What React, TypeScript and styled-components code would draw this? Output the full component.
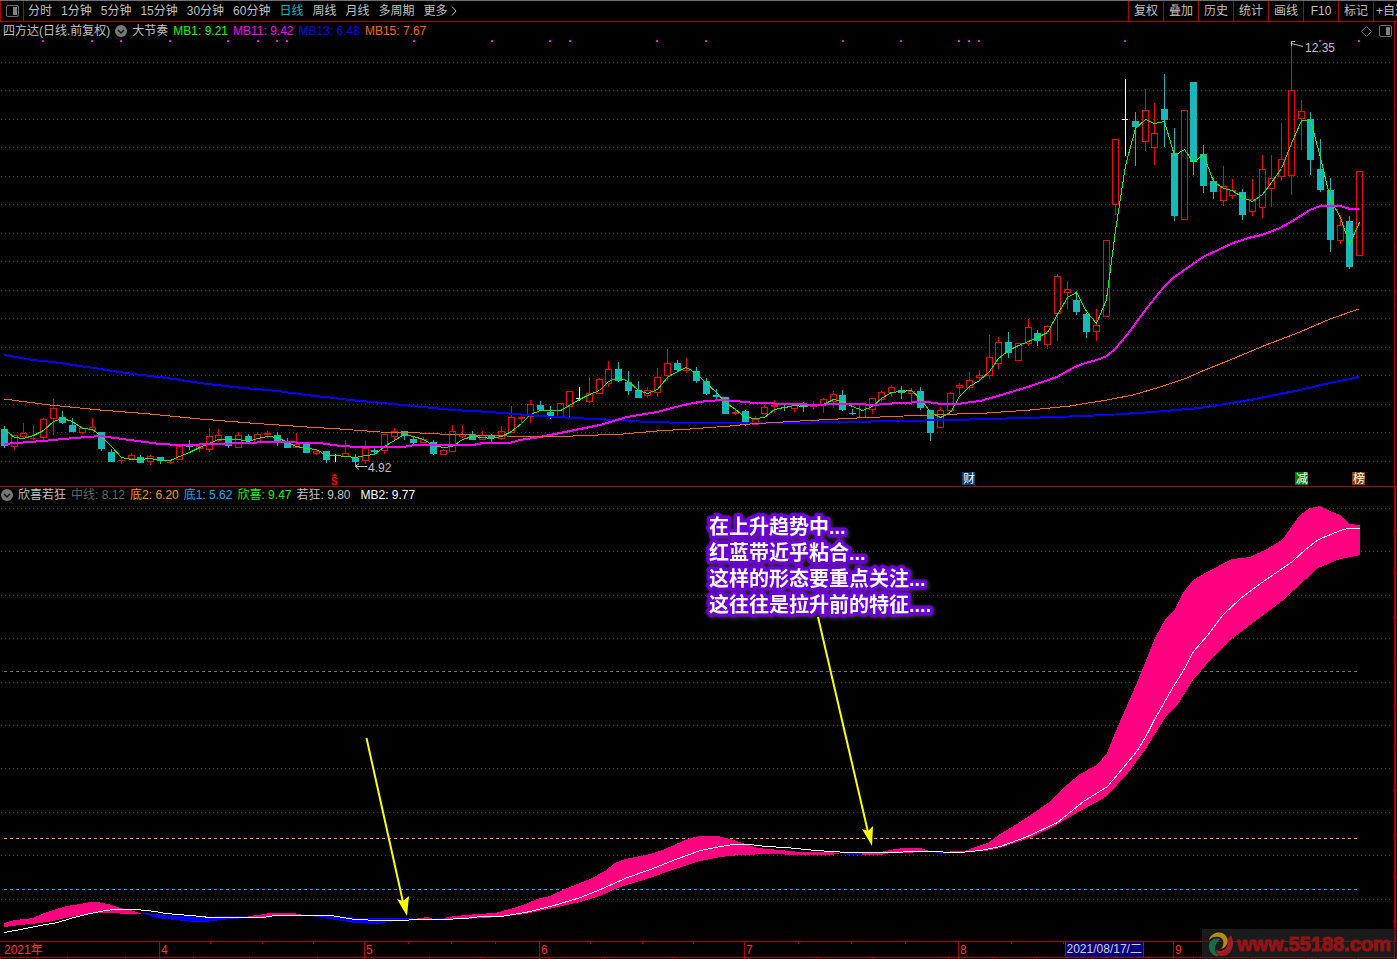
import React from "react";
import styled, { createGlobalStyle } from "styled-components";

const GlobalStyle = createGlobalStyle`
  * { box-sizing: border-box; }
  body { margin: 0; background: #000; overflow: hidden; }
`;

const FONT = '"Liberation Sans", "Noto Sans CJK SC", sans-serif';
const RED = "#b00000";

const Page = styled.main`
  position: relative;
  display: flex;
  flex-direction: column;
  height: 100vh;
  min-height: 600px;
  overflow: hidden;
  background: #000;
  color: #c0c0c0;
  font: 12px/16px ${FONT};
`;

const Toolbar = styled.nav`
  flex: none;
  display: flex;
  height: 22px;
  border-top: 1px solid #707070;
  border-bottom: 1px solid ${RED};
  overflow: hidden;
`;

const PanelToggle = styled.button`
  flex: none;
  width: 24px;
  padding: 0;
  border: 0;
  border-left: 1px solid ${RED};
  border-right: 1px solid ${RED};
  background: none;
  display: flex;
  align-items: center;
  justify-content: center;
`;

const Periods = styled.div`
  flex: 1;
  display: flex;
  align-items: center;
  gap: 9px;
  padding-left: 4px;
  min-width: 0;
`;

const PeriodButton = styled.button<{ $active?: boolean }>`
  padding: 0;
  border: 0;
  background: none;
  display: flex;
  align-items: center;
  color: ${(p) => (p.$active ? "#18b8b8" : "#c0c0c0")};
  font: 12px/18px ${FONT};
  white-space: nowrap;
`;

const Tools = styled.div`
  flex: none;
  display: flex;
`;

const ToolButton = styled.button<{ $cut?: boolean }>`
  width: ${(p) => (p.$cut ? "24px" : "35px")};
  padding: 0 0 0 ${(p) => (p.$cut ? "2px" : "0")};
  border: 0;
  border-left: 1px solid ${RED};
  background: none;
  color: #c0c0c0;
  font: 12px/18px ${FONT};
  text-align: ${(p) => (p.$cut ? "left" : "center")};
  white-space: nowrap;
  overflow: hidden;
`;

const Pane = styled.section<{ $grow: number; $divided?: boolean }>`
  flex: ${(p) => p.$grow} 1 0;
  min-height: 0;
  display: grid;
  grid-template-columns: 1fr 3px;
  border-bottom: ${(p) => (p.$divided ? `1px solid ${RED}` : "0")};
`;

const PaneBody = styled.div`
  display: flex;
  flex-direction: column;
  min-width: 0;
  min-height: 0;
`;

const Legend = styled.header<{ $tall?: boolean }>`
  flex: none;
  display: flex;
  align-items: center;
  gap: 5px;
  height: ${(p) => (p.$tall ? "18px" : "16px")};
  padding: 0 2px 0 ${(p) => (p.$tall ? "3px" : "1px")};
  white-space: nowrap;
`;

const LegendValue = styled.span<{ $color: string; $gap?: boolean }>`
  color: ${(p) => p.$color};
  margin-left: ${(p) => (p.$gap ? "5px" : "0")};
`;

const LegendActions = styled.div`
  margin-left: auto;
  display: flex;
  align-items: center;
  gap: 7px;
`;

const IconButton = styled.button`
  flex: none;
  padding: 0;
  border: 0;
  background: none;
  display: flex;
`;

const Canvas = styled.svg`
  flex: 1;
  display: block;
  width: 100%;
  min-height: 0;
`;

const Scale = styled.svg`
  display: block;
  width: 3px;
  height: 100%;
`;

const NoteLine = styled.text`
  fill: #fff;
  font: bold 20px ${FONT};
  stroke: #6a00d4;
  stroke-width: 7px;
  stroke-linejoin: round;
  paint-order: stroke;
`;

const NoteGroup = styled.g`
  filter: drop-shadow(1px 1px 2px rgba(255, 255, 255, 0.25));
`;

const TimeAxis = styled.footer`
  position: relative;
  flex: none;
  display: grid;
  grid-template-columns: 159fr 205fr 175fr 205fr 214fr 215fr 221fr 3px;
  height: 18px;
  border-top: 1px solid ${RED};
  color: #ff3232;
  line-height: 17px;
`;

const Month = styled.span<{ $first?: boolean }>`
  padding-left: ${(p) => (p.$first ? "4px" : "1px")};
  border-left: ${(p) => (p.$first ? "0" : `1px solid ${RED}`)};
`;

const Ticks = styled.svg`
  position: absolute;
  left: 0;
  top: 0;
  width: 100%;
  height: 18px;
`;

const CursorDate = styled.time`
  position: absolute;
  left: 76.2%;
  top: 0;
  height: 15px;
  padding: 0 1px;
  border: solid ${RED};
  border-width: 0 1px;
  background: #00007f;
  color: #d0d0d0;
  line-height: 15px;
`;

const Watermark = styled.div`
  position: absolute;
  right: 0;
  bottom: 0;
  display: flex;
  align-items: center;
  gap: 3px;
  width: 195px;
  height: 30px;
  padding-left: 5px;
  background: rgba(44, 44, 44, 0.6);
  color: #901414;
  font: bold 20px/30px "Liberation Sans", sans-serif;
  -webkit-text-stroke: 1px #901414;
`;

type Candle = ["r" | "c" | "w", number, number, number, number];

// kind, high, body top, body bottom, low
const candles: Candle[] = [
  ["c",426,429,445,447],["r",435,435,446,449],["r",423,433,436,437],["r",425,438,438,439],["r",418,419,437,439],
  ["r",399,408,418,434],["c",411,417,422,423],["c",418,425,431,431],["r",427,428,432,433],["r",418,427,429,430],
  ["c",432,432,448,450],["c",449,452,461,461],["r",458,460,460,463],["r",453,455,458,458],["c",455,457,462,462],
  ["r",455,456,461,464],["c",457,457,460,463],["r",460,462,462,463],["r",446,446,459,459],["c",440,445,446,449],
  ["r",443,446,448,451],["r",428,436,449,451],["r",429,435,440,441],["c",436,436,445,447],["r",432,435,447,447],
  ["c",434,436,440,442],["r",432,434,442,442],["r",431,433,434,437],["c",432,435,441,445],["c",438,443,447,447],
  ["r",433,444,447,447],["c",444,444,452,452],["r",450,451,453,454],["c",451,451,459,462],["w",454,455,455,461],
  ["r",440,453,456,456],["c",454,458,461,466],["r",441,448,460,463],["c",447,450,451,454],["r",434,434,450,453],
  ["r",428,431,436,440],["c",431,431,435,439],["c",436,439,442,444],["r",437,439,442,442],["c",440,442,453,454],
  ["r",449,450,454,454],["r",425,431,451,451],["r",425,434,436,437],["c",431,434,439,439],["r",431,435,439,439],
  ["c",434,436,437,441],["r",426,431,438,439],["r",406,417,432,432],["r",415,417,418,423],["r",400,404,416,422],
  ["c",401,405,409,410],["c",406,412,416,418],["r",403,403,416,416],["r",391,391,406,417],["w",387,398,398,400],
  ["r",377,393,401,402],["r",378,379,393,393],["r",361,369,383,386],["c",362,369,380,381],["c",371,382,390,394],
  ["c",381,390,397,397],["r",387,390,395,397],["r",368,377,392,396],["r",349,363,375,380],["c",360,363,369,370],
  ["r",358,370,370,372],["c",367,371,380,382],["c",378,381,393,394],["c",389,395,396,398],["c",397,397,413,413],
  ["r",408,412,413,414],["c",410,411,422,425],["r",416,419,424,424],["r",405,407,413,413],["r",400,405,406,412],
  ["c",405,407,407,410],["r",403,403,408,411],["c",402,403,406,411],["r",401,405,406,408],["r",398,399,404,412],
  ["r",391,394,401,407],["c",390,395,409,410],["c",409,413,413,414],["r",404,404,417,417],["r",398,398,409,413],
  ["r",391,392,399,401],["r",385,387,392,396],["c",386,390,392,398],["r",388,391,393,404],["c",387,391,407,409],
  ["c",410,410,432,440],["r",407,410,427,427],["r",392,393,410,410],["r",383,385,387,394],["r",372,380,387,389],
  ["r",370,375,377,379],["r",335,357,375,378],["r",337,342,363,368],["c",332,342,352,357],["r",343,343,360,360],
  ["r",319,327,343,345],["c",330,333,340,345],["r",325,326,344,348],["r",274,276,313,340],["r",281,289,292,308],
  ["c",291,300,311,314],["c",313,314,331,337],["r",309,325,331,340],["r",240,240,316,316],["r",139,139,204,214],
  ["w",79,119,119,155],["c",112,121,126,165],["r",89,110,141,150],["r",103,133,147,164],["c",74,109,119,146],
  ["c",128,153,215,220],["r",110,110,219,219],["c",82,82,161,174],["c",145,154,185,192],["c",178,181,191,198],
  ["r",166,186,200,205],["r",179,190,195,198],["c",189,192,214,219],["r",179,199,211,215],["r",155,169,207,217],
  ["r",155,178,188,206],["r",123,159,176,180],["r",45,90,175,194],["r",100,111,118,149],["c",112,119,159,174],
  ["c",139,169,189,191],["c",178,190,239,251],["r",215,225,240,243],["c",216,221,266,268],["r",171,171,255,255],
];

const fastLine = [
  429,437,438,435,430,421,418,421,428,429,436,446,457,459,459,458,460,460,456,452,447,443,439,439,439,441,438,436,437,442,
  446,448,449,455,455,456,457,455,454,446,440,434,436,439,445,447,446,439,436,437,438,436,431,423,414,410,410,410,405,399,
  394,390,381,377,381,390,393,389,377,371,367,373,383,392,402,409,417,418,417,409,407,405,406,405,404,399,401,406,410,406,
  398,392,391,390,398,412,417,412,396,386,380,371,358,350,345,341,337,332,314,297,292,311,323,299,230,165,128,119,123,121,
  155,149,162,154,181,188,190,197,201,194,182,168,143,120,120,157,199,217,244,222,
];

const barX = (i: number) => 4 + Math.round((i * 1355) / 139);

const magentaLine = "4,444 43,441 63,439 100,436 130,440 160,444 180,445 220,444 270,442 320,443 340,446 360,447 403,447 415,445 473,445 483,443 510,443 520,440 540,437 570,431 600,425 617,420 627,417 657,412 680,406 693,403 707,401 723,400 735,401 755,403 793,404 820,405 833,404 860,404 872,405 887,404 897,403 927,402 942,404 957,404 980,401 998,396 1028,387 1057,377 1073,368 1085,363 1097,360 1107,356 1115,349 1127,335 1147,308 1163,288 1173,278 1203,257 1233,243 1252,237 1262,235 1280,228 1291,222 1310,210 1320,206 1340,206 1350,209 1359,209";
const blueLine = "4,355 33,360 53,362 100,369 133,374 167,378 200,383 233,387 277,391 307,395 350,400 393,404 453,410 490,412 540,416 573,418 617,420 647,422 690,423 780,423 843,422 900,421 950,420 990,419 1057,417 1107,415 1153,412 1200,408 1250,400 1300,390 1330,383 1359,377";
const orangeLine = "4,399 50,405 100,410 150,414 200,419 250,423 307,427 340,429 380,432 420,433 440,434 507,436 573,436 623,434 657,431 690,429 730,426 750,424 800,421 857,418 927,415 987,413 1030,410 1070,406 1107,400 1133,395 1160,387 1187,378 1200,372 1230,360 1266,345 1300,332 1330,319 1359,309";

const pinkBands = [
  "4,923 15,920 33,918 42,914 53,910 67,906 80,904 90,902 97,902 108,904 120,908 130,910 143,914 97,913 80,915 65,918 53,921 40,923 20,925 4,927",
  "248,916 258,915 270,913 293,913 303,915 275,916 262,918 248,917",
  "413,919 428,917 433,919",
  "443,918 455,916 477,914 495,913 510,909 523,905 540,898 550,896 565,889 590,879 605,871 615,863 625,859 650,854 665,849 690,838 700,836 718,836 730,839 745,844 757,848 780,850 800,852 831,852 842,854 825,855 800,855 770,854 740,855 720,857 700,861 675,869 650,878 620,887 600,896 580,902 553,908 525,914 500,917 443,920",
  "862,853 880,852 895,849 905,848 920,848 930,851 935,852 890,853 880,855 862,855",
  "950,851 965,851 975,847 988,843 1000,834 1017,824 1032,814 1048,803 1068,784 1080,774 1097,765 1107,753 1115,733 1133,692 1145,663 1155,638 1165,620 1175,609 1183,593 1193,580 1207,572 1232,559 1250,557 1267,549 1282,540 1300,515 1310,508 1320,506 1330,511 1340,515 1349,524 1360,525 1360,555 1340,559 1318,568 1282,601 1262,616 1233,638 1213,657 1193,680 1178,704 1165,718 1155,734 1145,750 1128,773 1107,796 1097,802 1080,811 1055,826 1032,837 1000,848 985,851 950,853",
];
const blueBands = [
  "143,913 165,915 200,917 230,916 248,916 248,918 230,919 205,922 195,922 175,920 158,918 143,914",
  "311,915 330,916 360,918 400,918 413,918 413,920 395,921 378,924 355,923 330,919 311,916",
  "433,918 445,918 445,920 433,920",
  "842,853 862,853 862,855 848,855",
  "935,852 950,852 945,854 940,854",
];
const trendLine = "4,932 20,929 40,925 57,922 70,918 85,914 105,910 115,909 135,909 155,911 165,913 190,915 210,917 262,917 275,915 330,915 355,919 380,920 405,920 413,919 440,919 465,918 480,916 500,916 525,912 550,906 580,897 600,889 627,877 650,869 675,859 700,850 720,846 733,844 750,844 765,846 785,847 815,850 848,852 895,852 910,851 925,851 960,852 980,850 1000,846 1027,836 1057,822 1083,801 1107,786 1123,767 1137,750 1147,733 1153,721 1165,700 1173,686 1183,670 1193,651 1207,635 1222,615 1240,598 1260,583 1292,561 1305,549 1318,539 1340,530 1347,528 1359,528";

const priceGrid = [62, 90, 119, 147, 176, 204, 233, 261, 290, 318, 347, 375, 404, 432, 461];
const trendGrid = [508, 551, 595, 638, 682, 725, 768, 812, 855, 899];
const signalDots = [42, 91, 120, 169, 227, 257, 276, 286, 413, 491, 549, 569, 656, 705, 842, 900, 958, 968, 978, 1124, 1319, 1358];
const upperTicks = [210, 262, 313, 408, 451, 495, 590, 642, 693, 798, 851, 905, 1011, 1063, 1116, 1226, 1279, 1332];
const lowerTicks = [0, 36, 67, 125, 193, 249, 317, 373, 429, 480, 548, 604, 672, 748, 816, 872, 948, 992, 1036, 1092, 1148, 1193, 1248, 1304, 1319, 1358];
const noteLines = ["在上升趋势中...", "红蓝带近乎粘合...", "这样的形态要重点关注...", "这往往是拉升前的特征...."];

const PanelIcon = () => (
  <svg width="13" height="12" viewBox="0 0 13 12">
    <rect x="0.5" y="0.5" width="12" height="11" rx="1.5" fill="none" stroke="#707070" />
    <rect x="7" y="2" width="4" height="8" fill="#808080" />
  </svg>
);

const ChevronIcon = () => (
  <svg width="12" height="12" viewBox="0 0 12 12">
    <circle cx="6" cy="6" r="6" fill="#777" />
    <path d="M3 5 L6 8 L9 5" fill="none" stroke="#111" strokeWidth="1.5" />
  </svg>
);

const Grid = ({ rows }: { rows: number[] }) => (
  <g stroke="#b40000" strokeDasharray="1 3" shapeRendering="crispEdges">
    {rows.map((y) => (
      <line key={y} x1="1" x2="1390" y1={y + 0.5} y2={y + 0.5} />
    ))}
  </g>
);

const CandleShape = ({ candle, x }: { candle: Candle; x: number }) => {
  const [kind, high, top, bottom, low] = candle;
  const color = kind === "r" ? "#ff0000" : kind === "c" ? "#18b8b8" : "#ffffff";
  const hollow = kind === "r" && bottom - top > 1;
  return (
    <g fill={color}>
      {hollow ? (
        <>
          <rect x={x} y={high} width="1" height={top - high} />
          <rect x={x} y={bottom} width="1" height={low - bottom + 1} />
          <rect x={x - 2.5} y={top + 0.5} width="6" height={bottom - top} fill="none" stroke={color} />
        </>
      ) : (
        <>
          <rect x={x} y={high} width="1" height={low - high + 1} />
          <rect x={x - 3} y={top} width={kind === "w" ? 6 : 7} height={bottom - top + 1} />
        </>
      )}
    </g>
  );
};

const Badge = ({ x, color, label }: { x: number; color: string; label: string }) => (
  <g>
    <rect x={x} y="472" width="13" height="13" fill={color} />
    <text x={x + 1} y="483" fontSize="12" fill="#fff">{label}</text>
  </g>
);

const periods = ["分时", "1分钟", "5分钟", "15分钟", "30分钟", "60分钟", "日线", "周线", "月线", "多周期"];
const tools = ["复权", "叠加", "历史", "统计", "画线", "F10", "标记"];

export default function App() {
  return (
    <Page>
      <GlobalStyle />
      <Toolbar>
        <PanelToggle aria-label="侧栏"><PanelIcon /></PanelToggle>
        <Periods>
          {periods.map((p) => (
            <PeriodButton key={p} $active={p === "日线"}>{p}</PeriodButton>
          ))}
          <PeriodButton>
            更多
            <svg width="10" height="12" viewBox="0 0 10 12">
              <path d="M4 1.5 L8 6 L4 10.5" fill="none" stroke="#c0c0c0" />
            </svg>
          </PeriodButton>
        </Periods>
        <Tools>
          {tools.map((t) => <ToolButton key={t}>{t}</ToolButton>)}
          <ToolButton $cut>+自选</ToolButton>
        </Tools>
      </Toolbar>

      <Pane $grow={464} $divided>
        <PaneBody>
          <Legend $tall>
            <span>四方达(日线.前复权)</span>
            <IconButton aria-label="指标菜单"><ChevronIcon /></IconButton>
            <span>大节奏</span>
            <LegendValue $color="#00ff00">MB1: 9.21</LegendValue>
            <LegendValue $color="#ff00ff">MB11: 9.42</LegendValue>
            <LegendValue $color="#0000ff">MB13: 6.48</LegendValue>
            <LegendValue $color="#ff6600">MB15: 7.67</LegendValue>
            <LegendActions>
              <IconButton aria-label="标记点">
                <svg width="11" height="11" viewBox="0 0 11 11">
                  <path d="M5.5 0.5 L10.5 5.5 L5.5 10.5 L0.5 5.5 Z" fill="none" stroke="#707070" />
                </svg>
              </IconButton>
              <IconButton aria-label="面板"><PanelIcon /></IconButton>
            </LegendActions>
          </Legend>
          <Canvas viewBox="0 40 1394 446" preserveAspectRatio="none" fontFamily={FONT}>
            <Grid rows={priceGrid} />
            <g fill="#ff00ff" shapeRendering="crispEdges">
              {signalDots.map((x) => <rect key={x} x={x} y="40" width="2" height="2" />)}
            </g>
            <g shapeRendering="crispEdges">
              {candles.map((c, i) => <CandleShape key={i} candle={c} x={barX(i)} />)}
            </g>
            <g fill="none" shapeRendering="crispEdges">
              <polyline
                points={fastLine.map((y, i) => `${barX(i)},${y}`).join(" ")}
                stroke="#00ff00"
                transform="translate(0.5 0.5)"
              />
              <polyline points={blueLine} stroke="#0000ff" strokeWidth="2" />
              <polyline points={magentaLine} stroke="#ff00ff" strokeWidth="2" />
              <polyline points={orangeLine} stroke="#ff6600" />
            </g>
            <g fill="none" stroke="#c0c0c0">
              <path d="M1291.5 43.5 L1303 46.5 M1295 41.5 H1291.5 V46" />
              <path d="M355.5 466.5 H367 M359 463.5 L355.5 466.5 L359 469.5" />
            </g>
            <text x="1305" y="52" fontSize="12" fill="#c0c0c0">12.35</text>
            <text x="368" y="472" fontSize="12" fill="#c0c0c0">4.92</text>
            <path d="M334.5 473.5 L337.5 476.5 H331.5 Z" fill="#ff0000" />
            <text x="331" y="485" fontSize="10" fontWeight="bold" fill="#ff0000">S</text>
            <Badge x={962} color="#003c78" label="财" />
            <Badge x={1295} color="#007f00" label="减" />
            <Badge x={1352} color="#804000" label="榜" />
          </Canvas>
        </PaneBody>
        <Scale viewBox="0 22 3 464" preserveAspectRatio="none" shapeRendering="crispEdges" fill={RED}>
          <rect x="0" y="22" width="1" height="464" />
          {priceGrid.map((y) => <rect key={y} x="1" y={y + 14} width="1" height="1" />)}
          <rect x="2" y="290" width="1" height="2" />
        </Scale>
      </Pane>

      <Pane $grow={454}>
        <PaneBody>
          <Legend>
            <IconButton aria-label="指标菜单"><ChevronIcon /></IconButton>
            <span>欣喜若狂</span>
            <LegendValue $color="#666666">中线: 8.12</LegendValue>
            <LegendValue $color="#ff9900">底2: 6.20</LegendValue>
            <LegendValue $color="#00b0ff">底1: 5.62</LegendValue>
            <LegendValue $color="#00ff00">欣喜: 9.47</LegendValue>
            <LegendValue $color="#c0c0c0">若狂: 9.80</LegendValue>
            <LegendValue $color="#ffffff" $gap>MB2: 9.77</LegendValue>
          </Legend>
          <Canvas viewBox="0 503 1394 438" preserveAspectRatio="none">
            <Grid rows={trendGrid} />
            <g strokeDasharray="3 3" shapeRendering="crispEdges">
              <line x1="4" x2="1359" y1="671.5" y2="671.5" stroke="#707070" />
              <line x1="4" x2="1359" y1="838.5" y2="838.5" stroke="#ff9900" />
              <line x1="4" x2="1359" y1="889.5" y2="889.5" stroke="#00b0ff" />
            </g>
            <g shapeRendering="crispEdges">
              {pinkBands.map((p) => <polygon key={p} points={p} fill="#ff0080" />)}
              {blueBands.map((p) => <polygon key={p} points={p} fill="#0000ff" />)}
              <polyline points={trendLine} fill="none" stroke="#fff" transform="translate(0.5 0.5)" />
            </g>
            <NoteGroup>
              {noteLines.map((line, i) => (
                <NoteLine key={line} x="709" y={534 + i * 26}>{line}</NoteLine>
              ))}
            </NoteGroup>
            <g stroke="#ffff00" strokeWidth="2" fill="#ffff00">
              <line x1="366.5" y1="738" x2="403" y2="902" />
              <line x1="818" y1="617" x2="868" y2="832" />
              <path d="M407 916 L397 899 L403 901 L409 896 Z" strokeWidth="0" />
              <path d="M872 846 L862 829 L868 831 L873 826 Z" strokeWidth="0" />
            </g>
          </Canvas>
        </PaneBody>
        <Scale viewBox="0 487 3 454" preserveAspectRatio="none" shapeRendering="crispEdges" fill={RED}>
          <rect x="0" y="487" width="2" height="454" />
          {trendGrid.map((y) => <rect key={y} x="2" y={y + 22} width="1" height="1" />)}
        </Scale>
      </Pane>

      <TimeAxis>
        <Month $first>2021年</Month>
        {["4", "5", "6", "7", "8", "9"].map((m) => <Month key={m}>{m}</Month>)}
        <Month />
        <Ticks viewBox="0 942 1397 18" preserveAspectRatio="none" shapeRendering="crispEdges" fill={RED}>
          {upperTicks.map((x) => <rect key={x} x={x} y="942" width="1" height="2" />)}
          <rect x="0" y="957" width="1397" height="1" />
          {lowerTicks.map((x) => <rect key={x} x={x} y="958" width="1" height="1" />)}
        </Ticks>
        <CursorDate dateTime="2021-08-17">2021/08/17/二</CursorDate>
      </TimeAxis>

      <Watermark>
        <svg width="27" height="27" viewBox="0 0 27 27">
          <path d="M2 9 C4 1 15 -1 19 5 C23 11 19 17 14 18 C18 13 17 7 12 6 C8 5 5 6 2 9 Z" fill="#b58a14" />
          <path d="M13 8 C6 6 1 11 2 17 C3 22 7 26 12 25 C7 21 6 15 13 8 Z" fill="#176b45" />
          <path d="M24 4 C28 12 26 25 14 25 C11 25 9 22 9 19 C15 22 22 18 21 8 Z" fill="#a01c24" />
        </svg>
        <span>www.55188.com</span>
      </Watermark>
    </Page>
  );
}
